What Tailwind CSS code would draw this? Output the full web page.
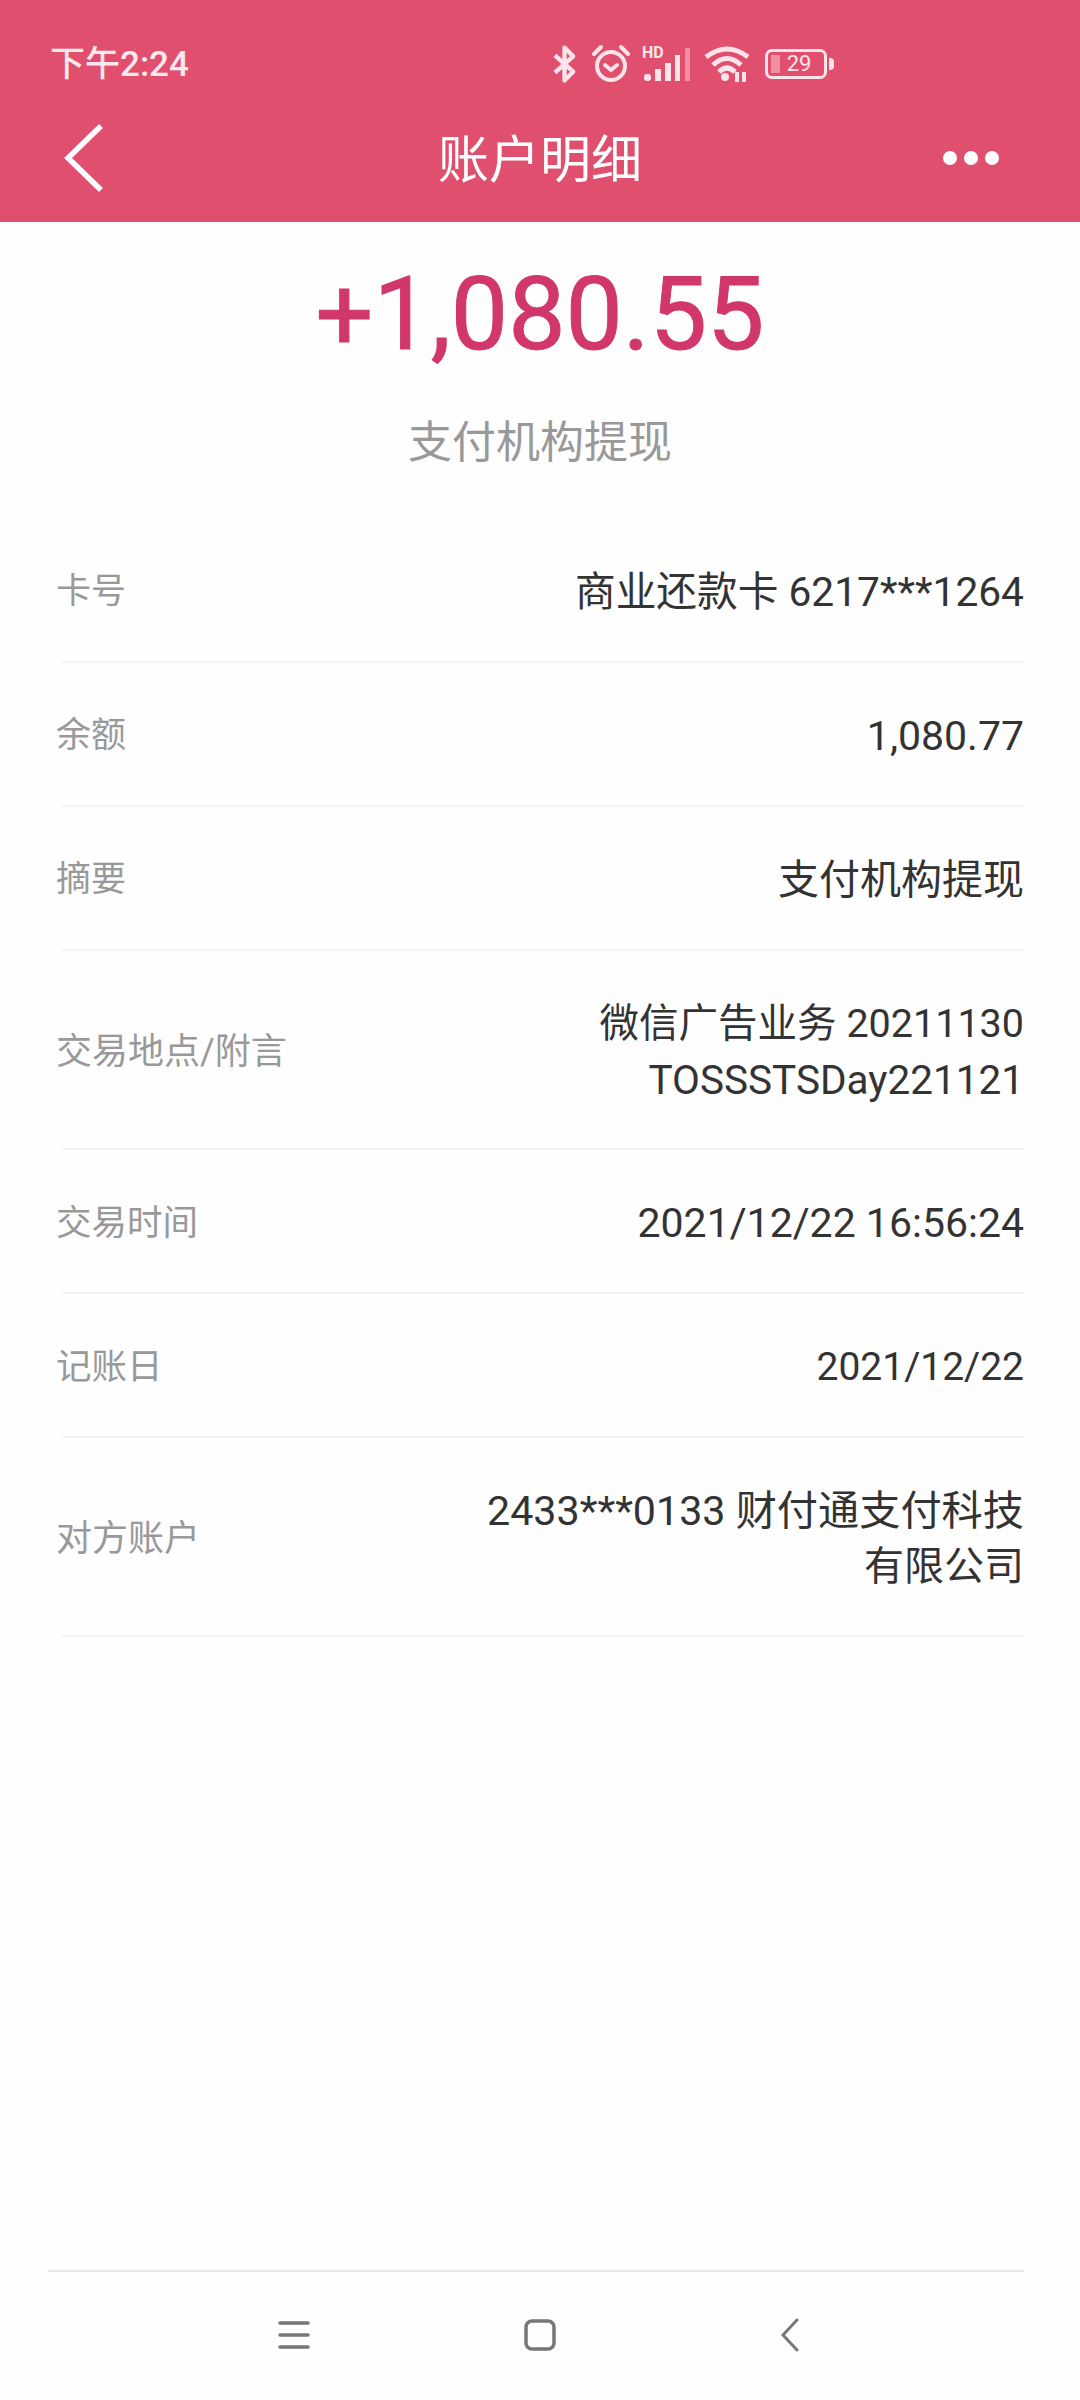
<!DOCTYPE html>
<html lang="zh-CN">
<head>
    <meta charset="UTF-8">
    <meta name="viewport" content="width=device-width, initial-scale=1.0">
    <title>账户明细</title>
    <script src="https://cdn.jsdelivr.net/npm/@tailwindcss/browser@4"></script>
</head>
<body class="bg-white">
<div class="w-[1080px] h-[2400px] flex flex-col bg-[#fefefe] font-['Roboto','Noto_Sans_CJK_SC',sans-serif]">

    <!-- 顶部状态栏和标题栏 -->
    <header class="h-[222px] shrink-0 bg-[#e0506e] text-white">
        <div class="h-[66px] mt-[31px] pl-[50px] pr-[253px] flex items-center justify-between">
            <span class="text-[35px] leading-none font-medium text-[#fde8ec]">下午2:24</span>
            <div class="flex items-center text-[#fde4ea]">
                <!-- 蓝牙 -->
                <svg class="w-[25px] h-[40px]" viewBox="0 0 26 40" fill="none" stroke="currentColor" stroke-width="4.5" stroke-linejoin="round"><path d="M3 11 L22 28 L13 37 V3 L22 12 L3 29"/></svg>
                <!-- 闹钟 -->
                <svg class="w-[40px] h-[40px] ml-[14px]" viewBox="0 0 40 40" fill="none" stroke="currentColor" stroke-width="4" stroke-linecap="round"><circle cx="20" cy="22" r="14"/><path d="M14 21 L20 26 L26 21"/><path d="M3 10 L10 3"/><path d="M37 10 L30 3"/></svg>
                <!-- 信号 -->
                <svg class="w-[50px] h-[40px] ml-[11px]" viewBox="0 0 50 40">
                    <text x="0" y="14" font-size="16" font-weight="700" fill="currentColor" font-family="Roboto">HD</text>
                    <rect x="2" y="30" width="7" height="7" rx="3" fill="currentColor"/>
                    <rect x="13" y="25" width="6" height="12" fill="currentColor"/>
                    <rect x="23" y="19" width="6" height="18" fill="currentColor"/>
                    <rect x="33" y="11" width="5" height="26" fill="currentColor"/>
                    <rect x="43" y="4" width="5" height="33" fill="#f08fa3"/>
                </svg>
                <!-- 无线网络 -->
                <svg class="w-[46px] h-[40px] ml-[12px]" viewBox="0 0 46 40" fill="none" stroke="currentColor" stroke-width="5"><path d="M2 13 Q23 -3 44 13"/><path d="M9 21 Q23 8 37 21"/><path d="M15 28 Q23 20 31 28"/><circle cx="21" cy="33" r="4" fill="currentColor" stroke="none"/><path d="M33 28 V38 M40 28 V38" stroke-width="4"/></svg>
                <!-- 电池 -->
                <div class="ml-[15px] w-[62px] h-[30px] rounded-[7px] border-[3px] border-[#fde4ea] relative flex items-center justify-center">
                    <div class="absolute left-[3px] top-[3px] bottom-[3px] w-[9px] bg-[#f08fa3]"></div>
                    <span class="relative text-[22px] leading-none ml-[6px]">29</span>
                    <div class="absolute right-[-10px] top-[6px] w-[5px] h-[12px] rounded-r bg-[#fde4ea]"></div>
                </div>
            </div>
        </div>
        <div class="h-[96px] mt-[13px] pl-[62px] pr-[81px] flex items-center justify-between relative">
            <svg class="w-[44px] h-[68px]" viewBox="0 0 44 68" fill="none" stroke="currentColor" stroke-width="5.5"><path d="M39 2 L6 34 L39 66"/></svg>
            <h1 class="absolute inset-x-0 mt-[4px] text-center text-[51px] leading-none">账户明细</h1>
            <div class="flex gap-[7px]">
                <span class="w-[14px] h-[14px] rounded-full bg-white"></span>
                <span class="w-[14px] h-[14px] rounded-full bg-white"></span>
                <span class="w-[14px] h-[14px] rounded-full bg-white"></span>
            </div>
        </div>
    </header>

    <main class="flex-1 flex flex-col">
        <div class="text-center text-[102px] [-webkit-text-stroke:1px_#d1376a] leading-none mt-[41px] text-[#d1376a]">+1,080.55</div>
        <div class="text-center text-[44px] leading-none mt-[56px] text-[#999999]">支付机构提现</div>

        <!-- 明细列表 -->
        <div class="mt-[54px] pr-[56px]">
            <div class="h-[144px] pt-[5px] ml-[62px] flex items-center justify-between border-b-2 border-[#f2f2f2]">
                <span class="text-[35px] -ml-[6px] text-[#999999]">卡号</span>
                <span class="text-[40.7px] text-[#333333]">商业还款卡 6217***1264</span>
            </div>
            <div class="h-[144px] pt-[5px] ml-[62px] flex items-center justify-between border-b-2 border-[#f2f2f2]">
                <span class="text-[35px] -ml-[6px] text-[#999999]">余额</span>
                <span class="text-[41px] text-[#333333]">1,080.77</span>
            </div>
            <div class="h-[144px] pt-[5px] ml-[62px] flex items-center justify-between border-b-2 border-[#f2f2f2]">
                <span class="text-[35px] -ml-[6px] text-[#999999]">摘要</span>
                <span class="text-[41px] text-[#333333]">支付机构提现</span>
            </div>
            <div class="h-[199px] pt-[5px] ml-[62px] flex items-center justify-between border-b-2 border-[#f2f2f2]">
                <span class="text-[36px] -ml-[6px] text-[#999999]">交易地点/附言</span>
                <div class="leading-[56px] text-right text-[#333333]">
                    <div class="text-[39.5px]">微信广告业务 20211130</div>
                    <div class="text-[40.5px]">TOSSSTSDay221121</div>
                </div>
            </div>
            <div class="h-[144px] pt-[5px] ml-[62px] flex items-center justify-between border-b-2 border-[#f2f2f2]">
                <span class="text-[35.5px] -ml-[6px] text-[#999999]">交易时间</span>
                <span class="text-[41px] text-[#333333]">2021/12/22 16:56:24</span>
            </div>
            <div class="h-[144px] pt-[5px] ml-[62px] flex items-center justify-between border-b-2 border-[#f2f2f2]">
                <span class="text-[35.5px] -ml-[6px] text-[#999999]">记账日</span>
                <span class="text-[39px] text-[#333333]">2021/12/22</span>
            </div>
            <div class="h-[199px] pt-[5px] ml-[62px] flex items-center justify-between border-b-2 border-[#f2f2f2]">
                <span class="text-[36px] -ml-[6px] text-[#999999]">对方账户</span>
                <div class="leading-[56px] text-right text-[#333333]">
                    <div class="text-[41.2px]">2433***0133 财付通支付科技</div>
                    <div class="text-[40px]">有限公司</div>
                </div>
            </div>
        </div>
    </main>

    <!-- 系统导航栏 -->
    <nav class="h-[130px] shrink-0 ml-[48px] mr-[56px] border-t-2 border-[#e8e8e8] text-[#777777] relative">
        <svg class="absolute left-[230px] top-[48px] w-[32px] h-[30px]" viewBox="0 0 32 30" fill="none" stroke="currentColor" stroke-width="3.5" stroke-linecap="round"><path d="M2 3 H30 M2 15 H30 M2 27 H30"/></svg>
        <svg class="absolute left-[476px] top-[47px] w-[32px] h-[32px]" viewBox="0 0 32 32" fill="none" stroke="currentColor" stroke-width="3.5"><rect x="2" y="2" width="28" height="28" rx="6"/></svg>
        <svg class="absolute left-[733px] top-[46px] w-[18px] h-[34px]" viewBox="0 0 18 34" fill="none" stroke="currentColor" stroke-width="3" stroke-linecap="round"><path d="M16 2 L2 17 L16 32"/></svg>
    </nav>
</div>
</body>
</html>
